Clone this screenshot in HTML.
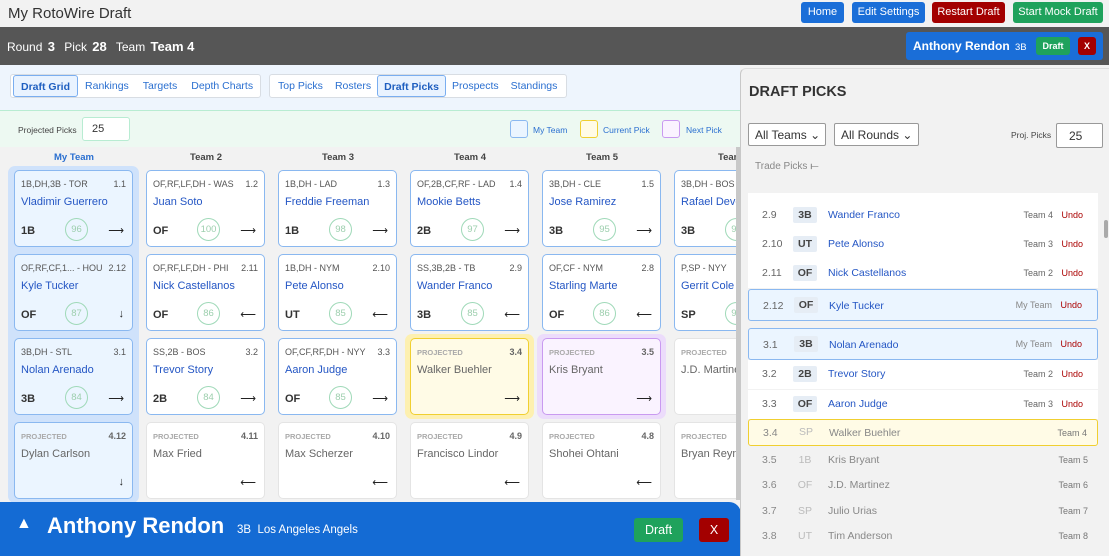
<!DOCTYPE html>
<html><head><meta charset="utf-8"><style>
*{box-sizing:border-box;margin:0;padding:0}
body{width:1109px;height:556px;overflow:hidden;font-family:"Liberation Sans",sans-serif;background:#f2f2f2;position:relative;color:#333}
.a{position:absolute;white-space:nowrap}
.btn{position:absolute;top:2px;height:21px;border-radius:3px;color:#fff;font-size:11px;line-height:21px;text-align:center;white-space:nowrap}
.tabs{position:absolute;top:74px;height:24px;border:1px solid #d8dde3;border-radius:3px;background:#fff;display:flex;align-items:center;font-size:10.5px;color:#2a6fd0;white-space:nowrap;padding-left:2px}
.tabs span{padding:0 7px;height:22px;line-height:22px;white-space:nowrap}
.tabs .on{border:1px solid #7aaef0;background:#e9f3ff;font-weight:bold;border-radius:3px;color:#1f5fc0}
.hd{position:absolute;top:152px;font-size:9.5px;font-weight:bold;color:#444;text-align:center;width:120px}
.card{position:absolute;width:119px;height:77px;border:1px solid #8ab8f0;border-radius:5px;background:#fff;font-size:9px;overflow:hidden}
.card .p{position:absolute;left:6px;top:8px;color:#555;white-space:nowrap}
.card .n{position:absolute;right:6px;top:8px;color:#555;background:inherit;padding-left:2px}
.card .nm{position:absolute;left:6px;top:25px;font-size:11px;color:#2456c4;white-space:nowrap}
.card .ps{position:absolute;left:6px;top:54px;font-size:11px;font-weight:bold;color:#333}
.card .c{position:absolute;left:50px;top:47px;width:23px;height:23px;border:1px solid #9fd9b8;border-radius:50%;text-align:center;line-height:21px;font-size:9.5px;color:#9dcfae}
.card .ar{position:absolute;right:8px;top:53px;font-size:11px;color:#222}
.card.pr{border-color:#e4e4e4}
.card.pr .p{font-size:7.5px;font-weight:bold;color:#aaa;top:9px}
.card.pr .n{font-weight:bold;color:#666}
.card.pr .nm{color:#666}
.mine{background:#ebf5ff}
.row{position:absolute;left:748px;width:350px;height:29px;background:#fff;font-size:10.5px}
.row .k{position:absolute;left:14px;top:8px;color:#666}
.row .b{position:absolute;left:45px;top:6px;width:24px;height:16px;background:#e6edf5;border-radius:2px;text-align:center;line-height:16px;font-weight:bold;color:#444}
.row .m{position:absolute;left:80px;top:8px;color:#2456c4}
.row .t{position:absolute;right:45px;top:9px;font-size:9px;color:#666}
.row .u{position:absolute;right:15px;top:9px;font-size:9px;color:#a00}
.row.g{background:transparent}
.row.g .b{background:none;font-weight:normal;color:#bbb}
.row.g .m,.row.g .k{color:#888}
.row.g .t{right:10px;color:#777}
</style></head><body>
<div class="a" style="left:8px;top:5px;font-size:15px;color:#333">My RotoWire Draft</div>
<div class="btn" style="left:801px;width:43px;background:#1a6ed8">Home</div>
<div class="btn" style="left:852px;width:73px;background:#1a6ed8">Edit Settings</div>
<div class="btn" style="left:932px;width:73px;background:#a30000">Restart Draft</div>
<div class="btn" style="left:1013px;width:90px;background:#1fa25c">Start Mock Draft</div>

<div class="a" style="left:0;top:27px;width:1109px;height:38px;background:#565656"></div>
<div class="a" style="left:7px;top:39px;color:#fff;font-size:12px">Round <b style="margin:0 6px 0 2px;font-size:13px">3</b> Pick <b style="margin:0 6px 0 2px;font-size:13px">28</b> Team <b style="font-size:13px;margin-left:2px">Team 4</b></div>
<div class="a" style="left:906px;top:32px;width:197px;height:28px;background:#1a6ed8;border-radius:3px"></div>
<div class="a" style="left:913px;top:39px;color:#fff;font-size:12px;font-weight:bold">Anthony Rendon <span style="font-weight:normal;font-size:9.5px;margin-left:2px">3B</span></div>
<div class="a" style="left:1036px;top:37px;width:34px;height:18px;background:#1fa25c;border-radius:3px;color:#fff;font-size:9px;font-weight:bold;text-align:center;line-height:18px">Draft</div>
<div class="a" style="left:1078px;top:37px;width:18px;height:18px;background:#a30000;border-radius:3px;color:#fff;font-size:9px;font-weight:bold;text-align:center;line-height:18px">X</div>

<div class="a" style="left:0;top:65px;width:740px;height:46px;background:#eef5fd"></div>
<div class="tabs" style="left:10px;width:251px"><span class="on">Draft Grid</span><span>Rankings</span><span>Targets</span><span>Depth Charts</span></div>
<div class="tabs" style="left:269px;width:298px"><span style="padding:0 6px">Top Picks</span><span style="padding:0 6px">Rosters</span><span class="on" style="padding:0 6px">Draft Picks</span><span style="padding:0 6px">Prospects</span><span style="padding:0 6px">Standings</span></div>
<div class="a" style="left:0;top:110px;width:740px;height:37px;background:#edf9f2;border-top:1px solid #b8ecd2"></div>
<div class="a" style="left:18px;top:125px;font-size:8.5px;color:#444">Projected Picks</div>
<div class="a" style="left:82px;top:117px;width:48px;height:24px;background:#fff;border:1px solid #b8ecd2;border-radius:3px;font-size:11px;padding:5px 0 0 9px">25</div>
<div class="a" style="left:510px;top:120px;width:18px;height:18px;border:1px solid #8ab8f0;background:#ebf5ff;border-radius:3px"></div>
<div class="a" style="left:533px;top:125px;font-size:8.5px;color:#2a6fd0">My Team</div>
<div class="a" style="left:580px;top:120px;width:18px;height:18px;border:1px solid #f0cf30;background:#fffbe6;border-radius:3px"></div>
<div class="a" style="left:603px;top:125px;font-size:8.5px;color:#2a6fd0">Current Pick</div>
<div class="a" style="left:662px;top:120px;width:18px;height:18px;border:1px solid #c99af0;background:#faf3ff;border-radius:3px"></div>
<div class="a" style="left:686px;top:125px;font-size:8.5px;color:#2a6fd0">Next Pick</div>

<div class="hd" style="left:14px;color:#2a6fd0">My Team</div>
<div class="hd" style="left:146px">Team 2</div>
<div class="hd" style="left:278px">Team 3</div>
<div class="hd" style="left:410px">Team 4</div>
<div class="hd" style="left:542px">Team 5</div>
<div class="hd" style="left:674px">Team 6</div>

<div class="a" style="left:8px;top:166px;width:131px;height:337px;background:#cfe2fb;border-radius:7px"></div>

<div class="card mine" style="left:14px;top:170px"><span class="p">1B,DH,3B - TOR</span><span class="n">1.1</span><span class="nm">Vladimir Guerrero</span><span class="ps">1B</span><span class="c">96</span><span class="ar">⟶</span></div>
<div class="card" style="left:146px;top:170px"><span class="p">OF,RF,LF,DH - WAS</span><span class="n">1.2</span><span class="nm">Juan Soto</span><span class="ps">OF</span><span class="c">100</span><span class="ar">⟶</span></div>
<div class="card" style="left:278px;top:170px"><span class="p">1B,DH - LAD</span><span class="n">1.3</span><span class="nm">Freddie Freeman</span><span class="ps">1B</span><span class="c">98</span><span class="ar">⟶</span></div>
<div class="card" style="left:410px;top:170px"><span class="p">OF,2B,CF,RF - LAD</span><span class="n">1.4</span><span class="nm">Mookie Betts</span><span class="ps">2B</span><span class="c">97</span><span class="ar">⟶</span></div>
<div class="card" style="left:542px;top:170px"><span class="p">3B,DH - CLE</span><span class="n">1.5</span><span class="nm">Jose Ramirez</span><span class="ps">3B</span><span class="c">95</span><span class="ar">⟶</span></div>
<div class="card" style="left:674px;top:170px"><span class="p">3B,DH - BOS</span><span class="n">1.6</span><span class="nm">Rafael Devers</span><span class="ps">3B</span><span class="c">93</span><span class="ar">⟶</span></div>

<div class="card mine" style="left:14px;top:254px"><span class="p">OF,RF,CF,1... - HOU</span><span class="n">2.12</span><span class="nm">Kyle Tucker</span><span class="ps">OF</span><span class="c">87</span><span class="ar">↓</span></div>
<div class="card" style="left:146px;top:254px"><span class="p">OF,RF,LF,DH - PHI</span><span class="n">2.11</span><span class="nm">Nick Castellanos</span><span class="ps">OF</span><span class="c">86</span><span class="ar">⟵</span></div>
<div class="card" style="left:278px;top:254px"><span class="p">1B,DH - NYM</span><span class="n">2.10</span><span class="nm">Pete Alonso</span><span class="ps">UT</span><span class="c">85</span><span class="ar">⟵</span></div>
<div class="card" style="left:410px;top:254px"><span class="p">SS,3B,2B - TB</span><span class="n">2.9</span><span class="nm">Wander Franco</span><span class="ps">3B</span><span class="c">85</span><span class="ar">⟵</span></div>
<div class="card" style="left:542px;top:254px"><span class="p">OF,CF - NYM</span><span class="n">2.8</span><span class="nm">Starling Marte</span><span class="ps">OF</span><span class="c">86</span><span class="ar">⟵</span></div>
<div class="card" style="left:674px;top:254px"><span class="p">P,SP - NYY</span><span class="n">2.7</span><span class="nm">Gerrit Cole</span><span class="ps">SP</span><span class="c">90</span><span class="ar">⟵</span></div>

<div class="card mine" style="left:14px;top:338px"><span class="p">3B,DH - STL</span><span class="n">3.1</span><span class="nm">Nolan Arenado</span><span class="ps">3B</span><span class="c">84</span><span class="ar">⟶</span></div>
<div class="card" style="left:146px;top:338px"><span class="p">SS,2B - BOS</span><span class="n">3.2</span><span class="nm">Trevor Story</span><span class="ps">2B</span><span class="c">84</span><span class="ar">⟶</span></div>
<div class="card" style="left:278px;top:338px"><span class="p">OF,CF,RF,DH - NYY</span><span class="n">3.3</span><span class="nm">Aaron Judge</span><span class="ps">OF</span><span class="c">85</span><span class="ar">⟶</span></div>
<div class="a" style="left:405px;top:334px;width:129px;height:85px;background:#fdf0b0;border-radius:7px"></div>
<div class="card pr" style="left:410px;top:338px;background:#fffbe6;border-color:#f0cf30"><span class="p">PROJECTED</span><span class="n">3.4</span><span class="nm">Walker Buehler</span><span class="ar">⟶</span></div>
<div class="a" style="left:537px;top:334px;width:129px;height:85px;background:#ecdcfb;border-radius:7px"></div>
<div class="card pr" style="left:542px;top:338px;background:#faf3ff;border-color:#c99af0"><span class="p">PROJECTED</span><span class="n">3.5</span><span class="nm">Kris Bryant</span><span class="ar">⟶</span></div>
<div class="card pr" style="left:674px;top:338px"><span class="p">PROJECTED</span><span class="n">3.6</span><span class="nm">J.D. Martinez</span><span class="ar">⟶</span></div>

<div class="card pr mine" style="left:14px;top:422px;border-color:#8ab8f0"><span class="p">PROJECTED</span><span class="n">4.12</span><span class="nm">Dylan Carlson</span><span class="ar">↓</span></div>
<div class="card pr" style="left:146px;top:422px"><span class="p">PROJECTED</span><span class="n">4.11</span><span class="nm">Max Fried</span><span class="ar">⟵</span></div>
<div class="card pr" style="left:278px;top:422px"><span class="p">PROJECTED</span><span class="n">4.10</span><span class="nm">Max Scherzer</span><span class="ar">⟵</span></div>
<div class="card pr" style="left:410px;top:422px"><span class="p">PROJECTED</span><span class="n">4.9</span><span class="nm">Francisco Lindor</span><span class="ar">⟵</span></div>
<div class="card pr" style="left:542px;top:422px"><span class="p">PROJECTED</span><span class="n">4.8</span><span class="nm">Shohei Ohtani</span><span class="ar">⟵</span></div>
<div class="card pr" style="left:674px;top:422px"><span class="p">PROJECTED</span><span class="n">4.7</span><span class="nm">Bryan Reynolds</span><span class="ar">⟵</span></div>

<div class="a" style="left:736px;top:147px;width:4px;height:353px;background:#c8c8c8"></div>

<div class="a" style="left:0;top:502px;width:741px;height:54px;background:#146bd4;border-top-right-radius:12px"></div>
<div class="a" style="left:16px;top:515px;color:#fff;font-size:16px">▲</div>
<div class="a" style="left:47px;top:513px;color:#fff;font-size:22px;font-weight:bold">Anthony Rendon</div>
<div class="a" style="left:237px;top:524px;color:#fff;font-size:11.5px">3B&nbsp;&nbsp;Los Angeles Angels</div>
<div class="a" style="left:634px;top:518px;width:49px;height:24px;background:#1fa25c;border-radius:3px;color:#fff;font-size:12.5px;text-align:center;line-height:24px">Draft</div>
<div class="a" style="left:699px;top:518px;width:30px;height:24px;background:#a30000;border-radius:3px;color:#fff;font-size:12.5px;text-align:center;line-height:24px">X</div>

<div class="a" style="left:740px;top:68px;width:369px;height:488px;background:#f2f2f2;border-left:1px solid #c8c8c8;border-top:1px solid #ddd;border-top-left-radius:6px"></div>
<div class="a" style="left:749px;top:84px;font-size:14.5px;font-weight:bold;color:#333">DRAFT PICKS</div>
<div class="a" style="left:748px;top:123px;width:78px;height:23px;border:1px solid #999;border-radius:2px;background:#fff;font-size:12px;padding:4px 0 0 6px">All Teams ⌄</div>
<div class="a" style="left:834px;top:123px;width:85px;height:23px;border:1px solid #999;border-radius:2px;background:#fff;font-size:12px;padding:4px 0 0 6px">All Rounds ⌄</div>
<div class="a" style="left:1011px;top:130px;font-size:8.5px;color:#444">Proj. Picks</div>
<div class="a" style="left:1056px;top:123px;width:47px;height:25px;border:1px solid #999;border-radius:2px;background:#fff;font-size:12px;padding:5px 0 0 12px">25</div>
<div class="a" style="left:755px;top:161px;font-size:10px;color:#888">Trade Picks ⟝</div>
<div class="a" style="left:748px;top:193px;width:350px;height:8px;background:#fff"></div>
<div class="row" style="top:201px"><span class="k">2.9</span><span class="b">3B</span><span class="m">Wander Franco</span><span class="t">Team 4</span><span class="u">Undo</span></div>
<div class="row" style="top:230px"><span class="k">2.10</span><span class="b">UT</span><span class="m">Pete Alonso</span><span class="t">Team 3</span><span class="u">Undo</span></div>
<div class="row" style="top:259px"><span class="k">2.11</span><span class="b">OF</span><span class="m">Nick Castellanos</span><span class="t">Team 2</span><span class="u">Undo</span></div>
<div class="row" style="top:289px;height:32px;background:#ebf5ff;border:1px solid #8ab8f0;border-radius:3px"><span class="k" style="top:10px">2.12</span><span class="b" style="top:7px">OF</span><span class="m" style="top:10px">Kyle Tucker</span><span class="t" style="top:10px;color:#888">My Team</span><span class="u" style="top:10px">Undo</span></div>
<div class="row" style="top:328px;height:32px;background:#ebf5ff;border:1px solid #8ab8f0;border-radius:3px"><span class="k" style="top:10px">3.1</span><span class="b" style="top:7px">3B</span><span class="m" style="top:10px">Nolan Arenado</span><span class="t" style="top:10px;color:#888">My Team</span><span class="u" style="top:10px">Undo</span></div>
<div class="row" style="top:360px"><span class="k">3.2</span><span class="b">2B</span><span class="m">Trevor Story</span><span class="t">Team 2</span><span class="u">Undo</span></div>
<div class="row" style="top:390px"><span class="k">3.3</span><span class="b">OF</span><span class="m">Aaron Judge</span><span class="t">Team 3</span><span class="u">Undo</span></div>
<div class="row g" style="top:419px;height:27px;background:#fffbe6;border:1px solid #f0cf30;border-radius:3px"><span class="k" style="top:7px">3.4</span><span class="b" style="top:4px">SP</span><span class="m" style="top:7px">Walker Buehler</span><span class="t" style="top:8px">Team 4</span></div>
<div class="row g" style="top:446px"><span class="k">3.5</span><span class="b">1B</span><span class="m">Kris Bryant</span><span class="t">Team 5</span></div>
<div class="row g" style="top:471px"><span class="k">3.6</span><span class="b">OF</span><span class="m">J.D. Martinez</span><span class="t">Team 6</span></div>
<div class="row g" style="top:497px"><span class="k">3.7</span><span class="b">SP</span><span class="m">Julio Urias</span><span class="t">Team 7</span></div>
<div class="row g" style="top:522px"><span class="k">3.8</span><span class="b">UT</span><span class="m">Tim Anderson</span><span class="t">Team 8</span></div>
<div class="a" style="left:1104px;top:220px;width:4px;height:18px;background:#aaa;border-radius:2px"></div>
</body></html>
